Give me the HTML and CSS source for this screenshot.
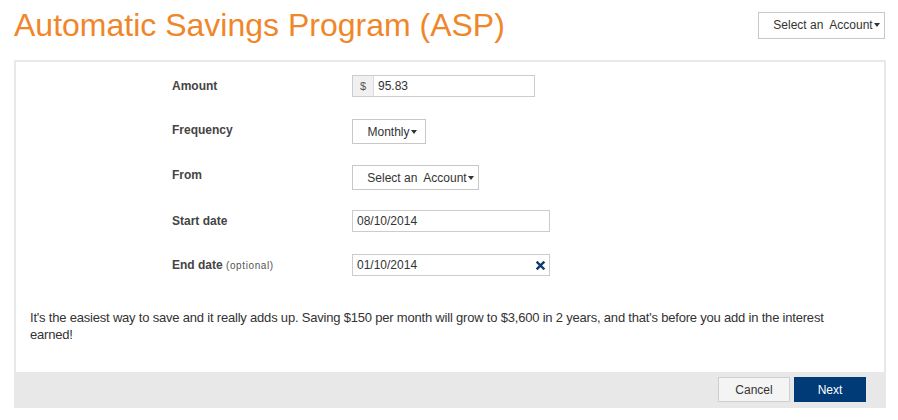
FILE: index.html
```html
<!DOCTYPE html>
<html>
<head>
    <title>Automatic Savings Program (ASP)</title>
    <link rel="stylesheet" href="styles.css">
</head>
<body>
    <div class="header">
        <h1>Automatic Savings Program (ASP)</h1>
        <button class="dropdown top-select">Select an&nbsp; Account<span class="caret"></span></button>
    </div>

    <div class="panel">
        <div class="form">
            <div class="row">
                <label>Amount</label>
                <div class="input-group">
                    <span class="addon">$</span>
                    <input type="text" value="95.83">
                </div>
            </div>
            <div class="row">
                <label class="freq-label">Frequency</label>
                <button class="dropdown freq">Monthly<span class="caret"></span></button>
            </div>
            <div class="row">
                <label class="from">From</label>
                <button class="dropdown account">Select an&nbsp; Account<span class="caret"></span></button>
            </div>
            <div class="row">
                <label>Start date</label>
                <input class="date" type="text" value="08/10/2014">
            </div>
            <div class="row">
                <label>End date <span class="optional">(optional)</span></label>
                <div class="date-wrap">
                    <input class="date" type="text" value="01/10/2014">
                    <svg class="clear" width="9" height="9" viewBox="0 0 9 9">
                        <path d="M1.5 1.5 L7.5 7.5 M7.5 1.5 L1.5 7.5" stroke="#0d3a6b" stroke-width="2.4" stroke-linecap="square"/>
                    </svg>
                </div>
            </div>
        </div>

        <p class="info">It's the easiest way to save and it really adds up. Saving $150 per month will grow to $3,600 in 2 years, and that's before you add in the interest earned!</p>

        <div class="footer">
            <button class="btn cancel">Cancel</button>
            <button class="btn next">Next</button>
        </div>
    </div>
</body>
</html>
```

FILE: styles.css
```css
body {
    font-family: Arial, "Liberation Sans", sans-serif;
    margin: 0;
    padding: 0;
    background: #fff;
    color: #333;
}
.header {
    display: flex;
    justify-content: space-between;
    align-items: center;
    height: 50px;
    padding: 0 13px 0 14px;
    margin-bottom: 10px;
}
.header h1 {
    margin: 0;
    font-weight: normal;
    font-size: 32px;
    color: #f0862a;
}
.dropdown {
    font-family: Arial, "Liberation Sans", sans-serif;
    font-size: 12px;
    color: #333;
    background: #fff;
    border: 1px solid #c8c8c8;
    height: 25px;
    padding: 0;
    text-align: center;
    cursor: pointer;
}
.caret {
    display: inline-block;
    width: 0;
    height: 0;
    border-left: 3.5px solid transparent;
    border-right: 3.5px solid transparent;
    border-top: 4px solid #333;
    vertical-align: 2px;
    margin-left: 1px;
}
.top-select {
    width: 127px;
    height: 27px;
    padding-left: 10px;
}
.panel {
    margin: 0 12px 0 14px;
    border: 2px solid #e8e8e8;
    border-bottom: 0;
}
.form {
    padding: 13px 0 0 156px;
}
.row {
    display: flex;
    align-items: center;
}
.row + .row {
    margin-top: 22px;
}
.row:nth-child(3) {
    margin-top: 21px;
}
.row:nth-child(4) {
    margin-top: 20px;
}
.row label {
    width: 180px;
    font-size: 12px;
    font-weight: bold;
    color: #444;
}
.row label.freq-label {
    margin-top: -4px;
}
.row label.from {
    margin-top: -5px;
}
.optional {
    font-weight: normal;
    font-size: 10px;
    letter-spacing: 0.6px;
    color: #555;
}
.input-group {
    display: flex;
    width: 183px;
    height: 22px;
    box-sizing: border-box;
    border: 1px solid #ccc;
}
.addon {
    width: 20px;
    background: #f0f0f0;
    border-right: 1px solid #ddd;
    font-size: 11px;
    color: #555;
    text-align: center;
    line-height: 20px;
}
.input-group input {
    flex: 1;
    border: 0;
    padding: 0 4px;
    font-family: Arial, "Liberation Sans", sans-serif;
    font-size: 12px;
    color: #333;
    outline: none;
    min-width: 0;
}
.freq {
    width: 74px;
    padding-left: 6px;
}
.account {
    width: 127px;
    padding-left: 10px;
}
.date {
    width: 198px;
    height: 22px;
    box-sizing: border-box;
    border: 1px solid #ccc;
    padding: 0 4px;
    font-family: Arial, "Liberation Sans", sans-serif;
    font-size: 12px;
    color: #333;
}
.date-wrap {
    position: relative;
}
.clear {
    position: absolute;
    right: 5px;
    top: 7px;
}
.info {
    margin: 33px 0 0 0;
    padding: 0 40px 0 14px;
    font-size: 13px;
    letter-spacing: -0.2px;
    line-height: 17px;
    color: #333;
}
.footer {
    margin: 29px -2px 0 -2px;
    background: #e8e8e8;
    height: 36px;
    display: flex;
    justify-content: flex-end;
    align-items: flex-start;
    gap: 4px;
    padding: 5px 20px 0 0;
    box-sizing: border-box;
}
.btn {
    width: 72px;
    height: 25px;
    font-family: Arial, "Liberation Sans", sans-serif;
    font-size: 12px;
    cursor: pointer;
}
.cancel {
    background: #f4f4f4;
    border: 1px solid #cfcfcf;
    color: #333;
}
.next {
    background: #003b78;
    border: 1px solid #003b78;
    color: #fff;
}
```
